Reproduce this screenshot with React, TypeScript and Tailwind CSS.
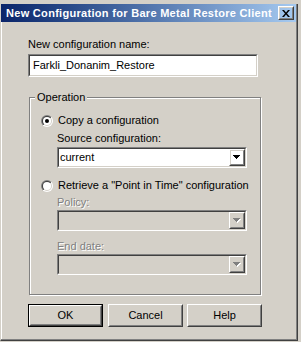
import type { ReactNode } from 'react'

const font = "font-['Liberation_Sans',Arial,sans-serif]"

function Raised({ className = '', children }: { className?: string; children?: ReactNode }) {
  return (
    <div className={`border border-t-white border-l-white border-r-[#404040] border-b-[#404040] ${className}`}>
      <div className="h-full border border-t-[#d4d0c8] border-l-[#d4d0c8] border-r-[#808080] border-b-[#808080] flex items-center justify-center">
        {children}
      </div>
    </div>
  )
}

function Sunken({ className = '', disabled = false, children }: { className?: string; disabled?: boolean; children?: ReactNode }) {
  return (
    <div className={`border border-t-[#808080] border-l-[#808080] border-r-white border-b-white ${className}`}>
      <div
        className={`h-full flex items-center border border-t-[#404040] border-l-[#404040] border-r-[#d4d0c8] border-b-[#d4d0c8] ${
          disabled ? 'bg-[#d4d0c8]' : 'bg-white'
        }`}
      >
        {children}
      </div>
    </div>
  )
}

function Arrow({ disabled = false }: { disabled?: boolean }) {
  return (
    <svg width="8" height="5" viewBox="0 0 8 5" shapeRendering="crispEdges">
      {disabled && <path d="M1 1h7L4.5 5z" fill="#fff" />}
      <path d="M0 0h7L3.5 4z" fill={disabled ? '#808080' : '#000'} />
    </svg>
  )
}

function Combo({ value, disabled = false }: { value?: string; disabled?: boolean }) {
  return (
    <Sunken className="w-[190px] h-[21px]" disabled={disabled}>
      <span className="flex-1 pl-[1px] whitespace-nowrap">{value}</span>
      <Raised className="w-[16px] h-[17px]">
        <Arrow disabled={disabled} />
      </Raised>
    </Sunken>
  )
}

function Radio({ checked = false }: { checked?: boolean }) {
  return (
    <svg width="12" height="12" viewBox="0 0 12 12" className="shrink-0">
      <defs>
        <linearGradient id="rOut" x1="0" y1="0" x2="1" y2="1">
          <stop offset="0.5" stopColor="#808080" />
          <stop offset="0.5" stopColor="#ffffff" />
        </linearGradient>
        <linearGradient id="rIn" x1="0" y1="0" x2="1" y2="1">
          <stop offset="0.5" stopColor="#404040" />
          <stop offset="0.5" stopColor="#d4d0c8" />
        </linearGradient>
      </defs>
      <circle cx="6" cy="6" r="6" fill="url(#rOut)" />
      <circle cx="6" cy="6" r="5" fill="url(#rIn)" />
      <circle cx="6" cy="6" r="4" fill="#fff" />
      {checked && <circle cx="6" cy="6" r="2" fill="#000" />}
    </svg>
  )
}

const disabledText = 'text-[#808080] [text-shadow:1px_1px_0_#fff]'

export default function App() {
  return (
    <div className={`w-[301px] h-[342px] overflow-hidden bg-[#d4d0c8] pt-[4px] text-[11px] leading-[13px] text-black ${font}`}>
      <div className="w-[298px] h-[337px] flex flex-col border-l border-r border-b border-l-[#d4d0c8] border-r-[#404040] border-b-[#404040] bg-[#d4d0c8] shadow-[inset_-1px_-1px_0_#808080,inset_1px_0_0_#fff]">
        <div className="h-[18px] mr-[1px] flex items-center pl-[5px] pr-[2px] bg-linear-to-r from-[#0a246a] to-[#a6caf0]">
          <span className="flex-1 whitespace-nowrap font-bold text-white tracking-[0.3px]">
            New Configuration for Bare Metal Restore Client
          </span>
          <Raised className="w-[16px] h-[14px]">
            <svg width="8" height="7" viewBox="0 0 8 7">
              <path d="M0 0h2l2 2.4L6 0h2L5 3.5 8 7H6L4 4.6 2 7H0l3-3.5z" fill="#000" />
            </svg>
          </Raised>
        </div>

        <div className="flex flex-col pl-[27px]">
          <div className="mt-[16px]">New configuration name:</div>
          <Sunken className="mt-[3px] w-[230px] h-[23px]">
            <span className="pl-[3px]">Farkli_Donanim_Restore</span>
          </Sunken>

          <div className="relative mt-[20px] ml-[1px] w-[232px] h-[198px] border border-[#808080] shadow-[inset_1px_1px_0_#fff,1px_1px_0_#fff]">
            <span className="absolute -top-[7px] left-[5px] bg-[#d4d0c8] px-[2px]">Operation</span>
            <div className="flex flex-col pl-[11px] pt-[16px]">
              <div className="flex items-center gap-[5px] h-[13px]">
                <Radio checked />
                <span>Copy a configuration</span>
              </div>
              <div className="ml-[16px] mt-[5px] flex flex-col">
                <span>Source configuration:</span>
                <div className="mt-[2px]">
                  <Combo value="current" />
                </div>
              </div>
              <div className="flex items-center gap-[5px] h-[13px] mt-[11px]">
                <Radio />
                <span>Retrieve a "Point in Time" configuration</span>
              </div>
              <div className="ml-[16px] mt-[4px] flex flex-col">
                <span className={disabledText}>Policy:</span>
                <div className="mt-[1px]">
                  <Combo disabled />
                </div>
                <span className={`mt-[9px] ${disabledText}`}>End date:</span>
                <div className="mt-[1px]">
                  <Combo disabled />
                </div>
              </div>
            </div>
          </div>

          <div className="flex mt-[9px]">
            <div className="w-[75px] h-[23px] border border-black">
              <Raised className="h-full">OK</Raised>
            </div>
            <Raised className="ml-[5px] w-[75px] h-[23px]">Cancel</Raised>
            <Raised className="ml-[4px] w-[75px] h-[23px]">Help</Raised>
          </div>
        </div>
      </div>
    </div>
  )
}
